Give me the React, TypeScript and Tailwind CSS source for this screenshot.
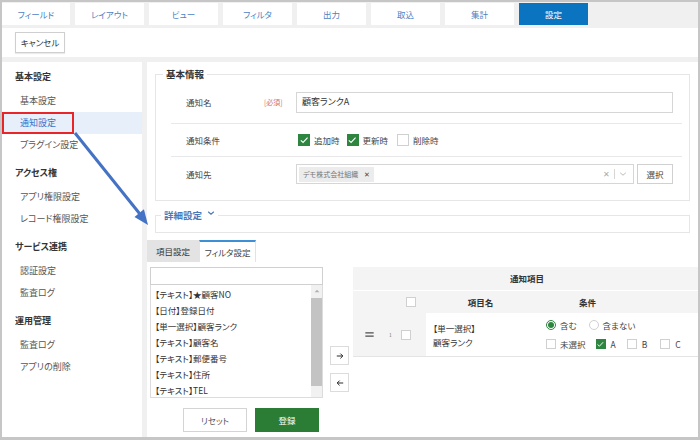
import React from "react";

const topTabs = ["フィールド", "レイアウト", "ビュー", "フィルタ", "出力", "取込", "集計", "設定"];

const menu = [
  { title: "基本設定", items: ["基本設定", "通知設定", "プラグイン設定"] },
  { title: "アクセス権", items: ["アプリ権限設定", "レコード権限設定"] },
  { title: "サービス連携", items: ["認証設定", "監査ログ"] },
  { title: "運用管理", items: ["監査ログ", "アプリの削除"] },
];

const fields = [
  "【テキスト】★顧客NO",
  "【日付】登録日付",
  "【単一選択】顧客ランク",
  "【テキスト】顧客名",
  "【テキスト】郵便番号",
  "【テキスト】住所",
  "【テキスト】TEL",
];

function Box({ checked, big }: { checked?: boolean; big?: boolean }) {
  const dim = big ? "w-[12px] h-[12px]" : "w-[10px] h-[10px]";
  if (checked) {
    return (
      <span className={`${dim} bg-[#2e8540] flex items-center justify-center shrink-0`}>
        <svg viewBox="0 0 10 10" className="w-[85%] h-[85%]">
          <path d="M1.8 5.2 L4 7.3 L8.4 2.6" fill="none" stroke="white" strokeWidth="1.1" />
        </svg>
      </span>
    );
  }
  return <span className={`${dim} border border-[#d0d0d0] bg-white shrink-0`} />;
}

function Radio({ on }: { on?: boolean }) {
  return on ? (
    <span className="w-[10px] h-[10px] rounded-full border border-[#2e8540] flex items-center justify-center shrink-0">
      <span className="w-[6px] h-[6px] rounded-full bg-[#2e8540]" />
    </span>
  ) : (
    <span className="w-[10px] h-[10px] rounded-full border border-[#d0d0d0] shrink-0" />
  );
}

function Sidebar() {
  return (
    <div className="w-[140px] bg-white pt-[4px] shrink-0">
      {menu.map((g, gi) => (
        <div key={gi} className={gi === 0 ? "" : "mt-[6px]"}>
          <div className="h-[22px] flex items-center pl-[13px] text-[9px] font-bold text-[#333]">{g.title}</div>
          <div className="mt-[2px]">
            {g.items.map((it) =>
              it === "通知設定" ? (
                <div key={it} className="relative h-[22px] flex items-center pl-[18px] text-[9px] text-[#3b73c9] bg-[#e7effb]">
                  {it}
                  <div className="absolute left-0 top-0 w-[72px] h-full border-2 border-[#e8262a]" />
                </div>
              ) : (
                <div key={it} className="h-[22px] flex items-center pl-[18px] text-[9px] text-[#555]">
                  {it}
                </div>
              )
            )}
          </div>
        </div>
      ))}
    </div>
  );
}

function BasicInfo() {
  return (
    <fieldset className="border border-[#e6e6e6]">
      <legend className="ml-[7px] px-[3px] text-[9.5px] font-bold leading-[14px] text-[#333]">基本情報</legend>
      <div className="pl-[15px] pr-[7px] pb-[9px]">
        <div className="h-[43px] flex items-center border-b border-[#e8e8e8] pl-[15px]">
          <span className="w-[78px] text-[8.5px] text-[#444]">通知名</span>
          <span className="w-[32px] text-[7px] text-[#d0726d]">[必須]</span>
          <div className="flex-1 mr-[9px] h-[21px] border border-[#d6d6d6] flex items-center pl-[5px] text-[9px] text-[#333]">
            顧客ランクA
          </div>
        </div>
        <div className="h-[33px] flex items-center border-b border-[#e8e8e8] pl-[15px]">
          <span className="w-[112px] text-[8.5px] text-[#444]">通知条件</span>
          <Box checked big />
          <span className="ml-[4px] mr-[7px] text-[8.5px] text-[#444]">追加時</span>
          <Box checked big />
          <span className="ml-[4px] mr-[9px] text-[8.5px] text-[#444]">更新時</span>
          <Box big />
          <span className="ml-[4px] text-[8.5px] text-[#444]">削除時</span>
        </div>
        <div className="h-[34px] flex items-center pl-[15px]">
          <span className="w-[110px] text-[8.5px] text-[#444]">通知先</span>
          <div className="flex-1 h-[20px] border border-[#d6d6d6] flex items-center pl-[2px] pr-[6px]">
            <span className="h-[15px] bg-[#ececec] flex items-center px-[4px] gap-[6px] text-[7px] text-[#777]">
              デモ株式会社組織<span className="text-[7px] text-[#444]">✕</span>
            </span>
            <span className="flex-1" />
            <span className="text-[8px] text-[#aaa]">✕</span>
            <span className="mx-[4px] w-px h-[10px] bg-[#d6d6d6]" />
            <svg viewBox="0 0 10 10" className="w-[8px] h-[8px]">
              <path d="M1.5 3.5 L5 6.5 L8.5 3.5" fill="none" stroke="#aaa" strokeWidth="1" />
            </svg>
          </div>
          <div className="ml-[3px] mr-[9px] w-[36px] h-[20px] border border-[#d0d0d0] flex items-center justify-center text-[8.5px] text-[#444]">
            選択
          </div>
        </div>
      </div>
    </fieldset>
  );
}

function FieldList() {
  return (
    <div className="w-[173px] shrink-0">
      <div className="h-[18px] border border-[#d0d0d0] bg-white" />
      <div className="h-[113px] border border-[#dcdcdc] border-t-0 flex overflow-hidden">
        <div className="flex-1 pt-[1px] pl-[4px]">
          {fields.map((f) => (
            <div key={f} className="h-[16px] flex items-center text-[8.5px] text-[#333] whitespace-nowrap">
              {f}
            </div>
          ))}
        </div>
        <div className="w-[11px] bg-[#f1f1f1] flex flex-col items-center">
          <svg viewBox="0 0 10 10" className="w-[6px] h-[6px] mt-[3px] mb-[4px]">
            <path d="M1 7 L5 3 L9 7 Z" fill="#b0b0b0" />
          </svg>
          <div className="w-full h-[88px] bg-[#c3c3c3]" />
        </div>
      </div>
      <div className="flex gap-[8px] pl-[33px] mt-[10px]">
        <div className="w-[64px] h-[24px] border border-[#d4d4d4] bg-white flex items-center justify-center text-[8.5px] text-[#555]">
          リセット
        </div>
        <div className="w-[64px] h-[24px] bg-[#2b7d35] flex items-center justify-center text-[8.5px] text-white">
          登録
        </div>
      </div>
    </div>
  );
}

function Arrow({ left }: { left?: boolean }) {
  return (
    <div className="w-[19px] h-[19px] border border-[#dcdcdc] bg-white flex items-center justify-center">
      <svg viewBox="0 0 10 10" className="w-[8px] h-[8px]">
        {left ? (
          <path d="M9 5 H1.5 M4.5 2 L1.5 5 L4.5 8" fill="none" stroke="#222" strokeWidth="1.2" />
        ) : (
          <path d="M1 5 H8.5 M5.5 2 L8.5 5 L5.5 8" fill="none" stroke="#222" strokeWidth="1.2" />
        )}
      </svg>
    </div>
  );
}

function NotifyTable() {
  return (
    <div className="w-[348px] shrink-0 ml-[4px]">
      <div className="h-[23px] bg-[#f4f4f4] flex items-center justify-center text-[8.5px] font-bold text-[#333]">
        通知項目
      </div>
      <div className="h-[23px] bg-[#f4f4f4] border-t border-white flex items-center text-[8.5px] font-bold text-[#333]">
        <span className="w-[53px]" />
        <Box />
        <span className="w-[10px]" />
        <span className="w-[109px] text-center">項目名</span>
        <span className="w-[105px] text-center">条件</span>
      </div>
      <div className="h-[44px] flex border-b border-[#e4e4e4]">
        <div className="w-[73px] shrink-0 bg-[#f4f4f4] flex items-center">
          <svg viewBox="0 0 10 6" className="ml-[12px] w-[9px] h-[5px]">
            <rect x="0" y="0" width="10" height="2" fill="#777" />
            <rect x="0" y="4" width="10" height="2" fill="#777" />
          </svg>
          <span className="ml-[15px] w-[12px] text-[5px] text-[#777]">1</span>
          <Box />
        </div>
        <div className="w-[109px] shrink-0 pl-[7px] flex flex-col justify-center text-[8.5px] text-[#333] leading-[14px]">
          <span>【単一選択】</span>
          <span>顧客ランク</span>
        </div>
        <div className="shrink-0 whitespace-nowrap pl-[11px] flex flex-col justify-center gap-[6px] text-[8.5px] text-[#444]">
          <div className="flex items-center">
            <Radio on />
            <span className="ml-[4px] mr-[12px]">含む</span>
            <Radio />
            <span className="ml-[4px]">含まない</span>
          </div>
          <div className="flex items-center">
            <Box />
            <span className="ml-[4px] mr-[10px]">未選択</span>
            <Box checked />
            <span className="ml-[5px] mr-[11px]">A</span>
            <Box />
            <span className="ml-[5px] mr-[13px]">B</span>
            <Box />
            <span className="ml-[5px]">C</span>
          </div>
        </div>
      </div>
    </div>
  );
}

export default function App() {
  return (
    <div className="relative w-[700px] h-[440px] overflow-hidden bg-[#c6c6c6] pt-[2px] pl-[2px] pr-[2px] pb-[3px] font-['Noto_Sans_CJK_JP','Noto_Sans',sans-serif] [font-feature-settings:'palt'] text-[#333]">
      <div className="flex flex-col h-full bg-[#f0f0f0]">
        <div className="h-[26px] flex gap-[5px] pt-[1px] shrink-0">
          {topTabs.map((t, i) => (
            <div
              key={t}
              className={`${i === 0 ? "w-[68px]" : "w-[69px]"} h-[22px] flex items-center justify-center text-[8.5px] ${
                t === "設定" ? "bg-[#0b74c0] text-white" : "bg-white text-[#4d7fc4]"
              }`}
            >
              {t}
            </div>
          ))}
        </div>
        <div className="h-[29px] bg-white flex items-start pl-[13px] pt-[4px] shrink-0">
          <div className="w-[50px] h-[21px] border border-[#cfcfcf] shadow-[0_1px_1px_rgba(0,0,0,0.08)] flex items-center justify-center text-[8.5px] text-[#333]">
            キャンセル
          </div>
        </div>
        <div className="flex-1 flex gap-[5px] mt-[5px] min-h-0">
          <Sidebar />
          <div className="flex-1 bg-white flex flex-col min-w-0 overflow-hidden">
            <div className="pt-[5px] pl-[8px] pr-[8px]">
              <BasicInfo />
              <fieldset className="border border-[#e6e6e6] mt-[7px]">
                <legend className="ml-[5px] px-[3px] text-[9.5px] font-bold leading-[14px] text-[#4b77b8] flex items-center">
                  詳細設定
                  <svg viewBox="0 0 10 10" className="ml-[5px] w-[8px] h-[8px] -mt-[4px]">
                    <path d="M1.5 3.5 L5 6.5 L8.5 3.5" fill="none" stroke="#4b77b8" strokeWidth="1.4" />
                  </svg>
                </legend>
                <div className="h-[10px]" />
              </fieldset>
            </div>
            <div className="flex mt-[7px] h-[22px] shrink-0">
              <div className="w-[52px] bg-[#e3e3e3] flex items-center justify-center text-[8.5px] text-[#333]">項目設定</div>
              <div className="w-[57px] bg-white border-t-2 border-[#3d8fd6] border-x border-x-[#e3e3e3] flex items-center justify-center text-[8.5px] text-[#444]">
                フィルタ設定
              </div>
            </div>
            <div className="flex pl-[3px] pt-[5px]">
              <FieldList />
              <div className="ml-[7px] pt-[79px] flex flex-col gap-[8px]">
                <Arrow />
                <Arrow left />
              </div>
              <NotifyTable />
            </div>
          </div>
        </div>
      </div>
      <svg viewBox="0 0 700 440" className="absolute inset-0 w-[700px] h-[440px] pointer-events-none">
        <line x1="75" y1="133" x2="139.5" y2="213.5" stroke="#4472c4" strokeWidth="3" />
        <polygon points="148,225 134.5,216.9 143.9,209.3" fill="#4472c4" />
      </svg>
    </div>
  );
}
